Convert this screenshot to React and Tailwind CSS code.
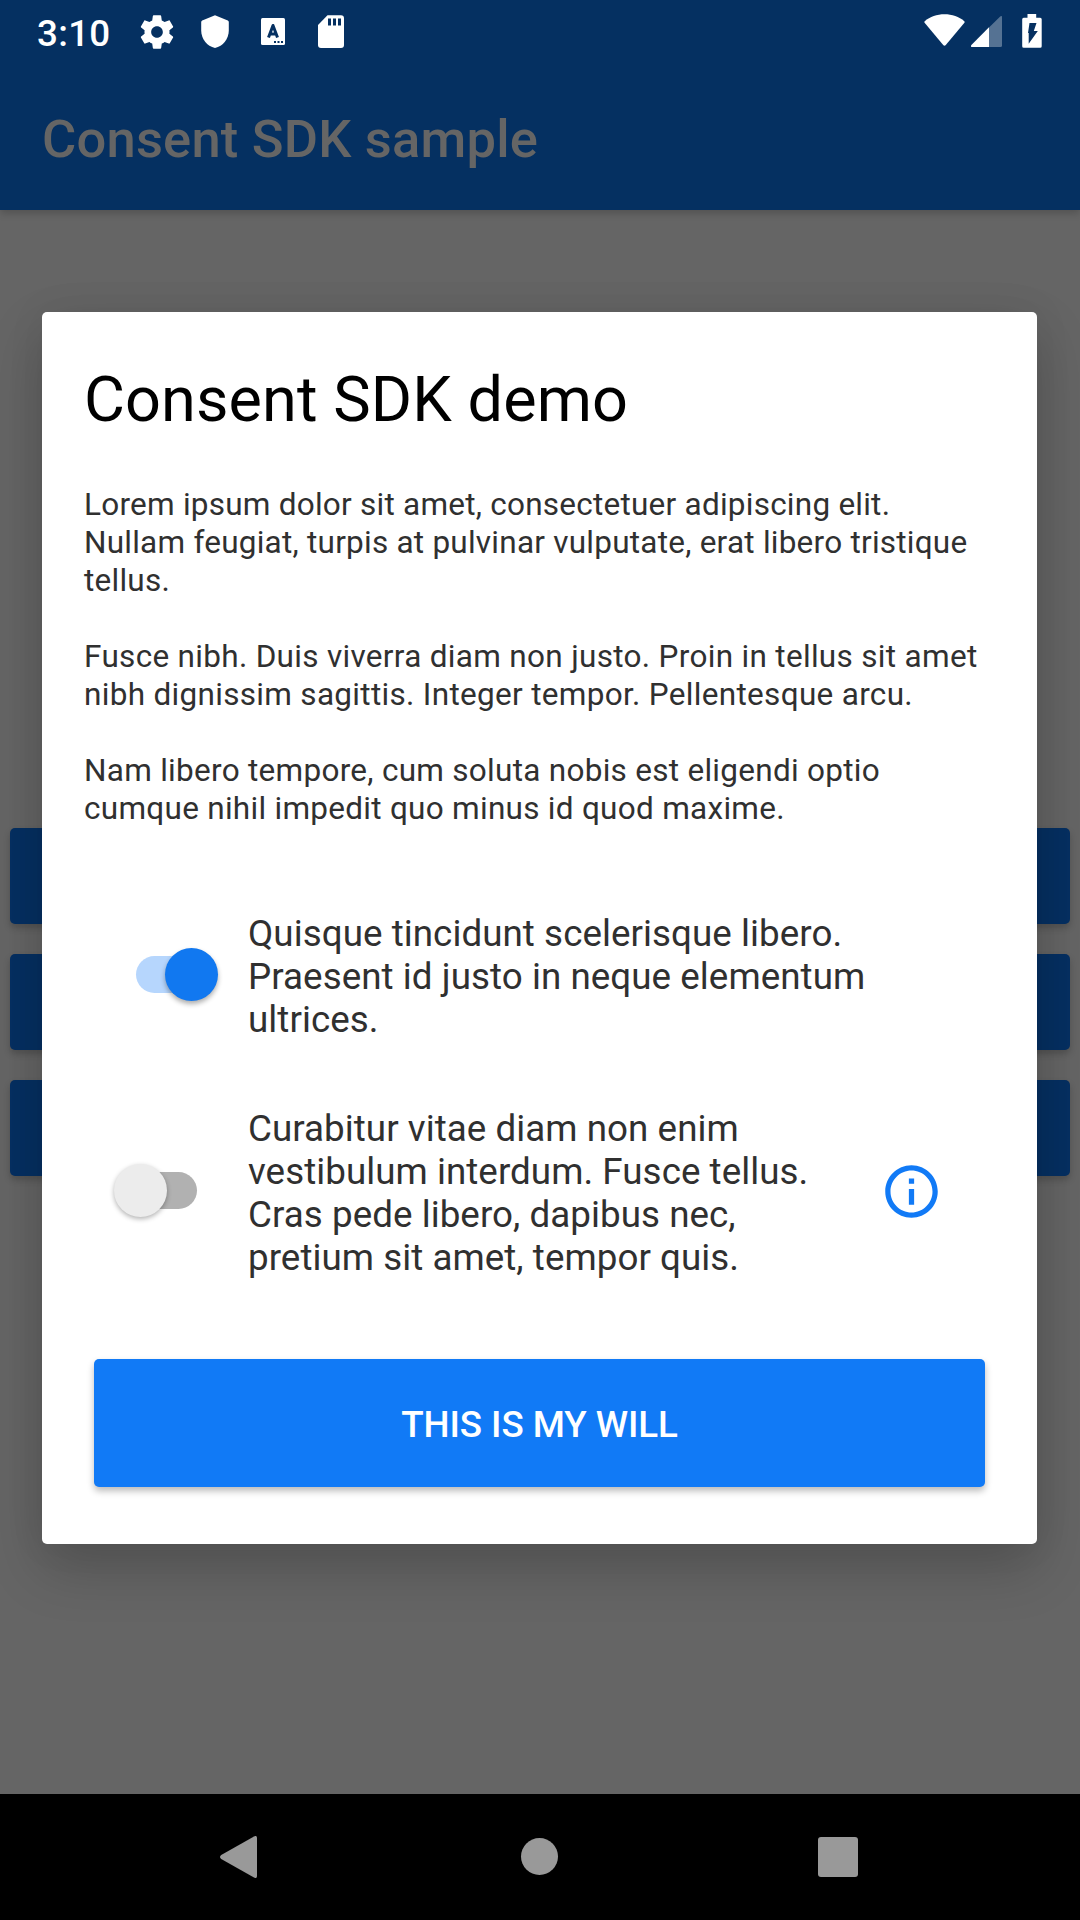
import React from 'react';

function StatusBar() {
  return (
    <div className="flex h-[63px] items-start text-white">
      <span className="ml-[37px] mt-[12px] w-[74px] whitespace-nowrap text-[36.75px] leading-[43px] font-medium tracking-[0.3px]">3:10</span>
      <svg className="ml-[26px] mt-[12px] size-10" viewBox="0 0 24 24" fill="currentColor">
        <path d="M19.43 12.98c.04-.32.07-.64.07-.98s-.03-.66-.07-.98l2.11-1.65c.19-.15.24-.42.12-.64l-2-3.46c-.12-.22-.39-.3-.61-.22l-2.49 1c-.52-.4-1.08-.73-1.69-.98l-.38-2.65C14.46 2.18 14.25 2 14 2h-4c-.25 0-.46.18-.49.42l-.38 2.65c-.61.25-1.17.59-1.69.98l-2.49-1c-.23-.09-.49 0-.61.22l-2 3.46c-.13.22-.07.49.12.64l2.11 1.65c-.04.32-.07.65-.07.98s.03.66.07.98l-2.11 1.65c-.19.15-.24.42-.12.64l2 3.46c.12.22.39.3.61.22l2.49-1c.52.4 1.08.73 1.69.98l.38 2.65c.03.24.24.42.49.42h4c.25 0 .46-.18.49-.42l.38-2.65c.61-.25 1.17-.59 1.69-.98l2.49 1c.23.09.49 0 .61-.22l2-3.46c.12-.22.07-.49-.12-.64l-2.11-1.65zM12 15.5c-1.93 0-3.5-1.57-3.5-3.5s1.57-3.5 3.5-3.5 3.5 1.57 3.5 3.5-1.57 3.5-3.5 3.5z" />
      </svg>
      <svg className="ml-6 mt-[15px] h-[33px] w-7" viewBox="0 0 28 33" fill="currentColor">
        <path d="M14 .3 26.800 5.500q1 .5 1 1.500v8.500C27.800 24 22 31.300 14 33 6 31.300.2 24 .2 15.500V7q0-1 1-1.500z" />
      </svg>
      <svg className="ml-8 mt-[18px] h-[27px] w-6" viewBox="0 0 24 27">
        <rect width="24" height="27" rx="1.5" fill="#fff" />
        <path d="M7.500 19.500 12 7.500l4.500 12M9 16h6" fill="none" stroke="#053061" strokeWidth="3" strokeLinejoin="round" />
        <path d="M13 23h2v2h-2zM16.500 23h2v2h-2zM20 23h2v2h-2z" fill="#053061" />
      </svg>
      <svg className="ml-[33px] mt-[15px] h-[33px] w-[26px]" viewBox="0 0 26 33">
        <path d="M9.500.3H23a3 3 0 0 1 3 3V30a3 3 0 0 1-3 3H3a3 3 0 0 1-3-3V10z" fill="#fff" />
        <path d="M10 3.500h3v7h-3zM15 3.500h3v7h-3zM20 3.500h3v7h-3z" fill="#053061" />
      </svg>
      <svg className="ml-auto mt-[14px] h-8 w-[41px]" viewBox="0 0 41 32" fill="currentColor">
        <path d="M.7 7.200C6 2.500 13 .2 20.500.2S35 2.500 40.300 7.200q.7.700.1 1.500L21.800 31q-1.300 1.300-2.600 0L.6 8.700Q0 7.900.7 7.200z" />
      </svg>
      <svg className="ml-[6px] mt-4 h-[31px] w-[31px]" viewBox="0 0 31 31">
        <path d="M29.200.5 18 11.500V31h11.500q1.500 0 1.500-1.500V1.200Q31-.8 29.200.5z" fill="#fff" fillOpacity=".32" />
        <path d="M18 11.200V31H1.200Q-.8 31 .4 29z" fill="#fff" />
      </svg>
      <svg className="ml-5 mr-[38px] mt-[14px] h-[34px] w-5" viewBox="0 0 20 34">
        <path d="M5.500 0h8.700v3.800h4q1.500 0 1.500 1.500v27q0 1.500-1.500 1.500H1.700q-1.500 0-1.500-1.500v-27q0-1.500 1.500-1.500h3.800z" fill="#fff" />
        <path d="M7.500 9h7l-2.700 8h4L6.700 29.800V19H6z" fill="#053061" />
      </svg>
    </div>
  );
}

function Toggle({ on }) {
  return on ? (
    <div className="flex h-[37px] w-[71px] rounded-full bg-[#b6d6fd]">
      <div className="-mt-[8px] ml-[29.5px] size-[52.5px] shrink-0 rounded-full bg-[#1178f0] shadow-[0_3px_5px_rgba(0,0,0,0.32)]" />
    </div>
  ) : (
    <div className="flex h-[37px] w-[65px] rounded-full bg-[#b1b1b1]">
      <div className="-mt-[8px] -ml-[18px] size-[52.5px] shrink-0 rounded-full bg-[#ececec] shadow-[0_2px_5px_rgba(0,0,0,0.3)]" />
    </div>
  );
}

function ConsentDialog() {
  return (
    <section className="absolute left-[42px] top-[312px] flex h-[1232px] w-[995px] flex-col rounded-[5px] bg-white shadow-[0_24px_56px_rgba(0,0,0,0.2),0_0_40px_rgba(0,0,0,0.06)]">
      <h1 className="ml-[42px] mt-[51px] whitespace-nowrap text-[63px] leading-[74px] tracking-[0.08px] text-black">Consent SDK demo</h1>
      <div className="ml-[42px] mt-[49px] flex flex-col gap-[38px] whitespace-nowrap text-[31.5px] leading-[38px] text-[#303030]">
        <p className="tracking-[0.24px]">Lorem ipsum dolor sit amet, consectetuer adipiscing elit.<br />Nullam feugiat, turpis at pulvinar vulputate, erat libero tristique<br />tellus.</p>
        <p className="tracking-[0.31px]">Fusce nibh. Duis viverra diam non justo. Proin in tellus sit amet<br />nibh dignissim sagittis. Integer tempor. Pellentesque arcu.</p>
        <p className="tracking-[0.28px]">Nam libero tempore, cum soluta nobis est eligendi optio<br />cumque nihil impedit quo minus id quod maxime.</p>
      </div>
      <div className="mt-[84px] flex text-[36.75px] leading-[43px] tracking-[0.06px] text-[#303030]">
        <div className="ml-[93.5px] mt-[44px] w-[112.5px]"><Toggle on /></div>
        <p className="whitespace-nowrap">Quisque tincidunt scelerisque libero.<br />Praesent id justo in neque elementum<br />ultrices.</p>
      </div>
      <div className="mt-[66px] flex text-[36.75px] leading-[43px] tracking-[0.05px] text-[#303030]">
        <div className="ml-[90px] mt-[65px] w-[116px]"><Toggle /></div>
        <p className="w-[631.5px] whitespace-nowrap">Curabitur vitae diam non enim<br />vestibulum interdum. Fusce tellus.<br />Cras pede libero, dapibus nec,<br />pretium sit amet, tempor quis.</p>
        <svg className="mt-[52.5px] h-[63px] w-[63px]" viewBox="0 0 24 24" fill="#117af6">
          <path d="M11 17h2v-6h-2v6zm1-15C6.480 2 2 6.480 2 12s4.480 10 10 10 10-4.480 10-10S17.520 2 12 2zm0 18c-4.410 0-8-3.590-8-8s3.590-8 8-8 8 3.590 8 8-3.590 8-8 8zM11 9h2V7h-2v2z" />
        </svg>
      </div>
      <button className="mb-[57px] ml-[52px] mt-auto h-[128px] w-[891px] rounded-[5px] bg-[#117af6] pt-[4px] text-[36.75px] font-medium tracking-[-0.07px] text-white shadow-[0_4px_7px_rgba(0,0,0,0.27)]">THIS IS MY WILL</button>
    </section>
  );
}

export default function App() {
  return (
    <main className="relative flex h-[1920px] w-[1080px] flex-col overflow-hidden bg-[#656565] font-['Roboto',sans-serif]">
      <header className="h-[210px] bg-[#053061] shadow-[0_3px_8px_rgba(0,0,0,0.2)]">
        <StatusBar />
        <div className="pl-[42px] pt-[45px] text-[52.5px] leading-[62px] font-medium tracking-[0.2px] whitespace-nowrap text-[#656565]">Consent SDK sample</div>
      </header>
      <div className="mt-[618px] flex flex-col gap-[30px] px-[10px]">
        <div className="h-24 rounded-[5px] bg-[#063062] shadow-[0_4px_7px_rgba(0,0,0,0.2)]" />
        <div className="h-24 rounded-[5px] bg-[#063062] shadow-[0_4px_7px_rgba(0,0,0,0.2)]" />
        <div className="h-24 rounded-[5px] bg-[#063062] shadow-[0_4px_7px_rgba(0,0,0,0.2)]" />
      </div>
      <ConsentDialog />
      <nav className="mt-auto flex h-[126px] items-start bg-black">
        <svg className="ml-[220px] mt-[42px] h-[42px] w-[37px]" viewBox="0 0 37 42" fill="#999">
          <path d="M34 .4q3-1.400 3 1.600v38q0 3-3 1.600L1.200 23q-2.400-2 0-4z" />
        </svg>
        <div className="ml-[264px] mt-[44px] size-[37px] rounded-full bg-[#999]" />
        <div className="ml-[260px] mt-[43px] size-10 rounded-[3px] bg-[#999]" />
      </nav>
    </main>
  );
}
